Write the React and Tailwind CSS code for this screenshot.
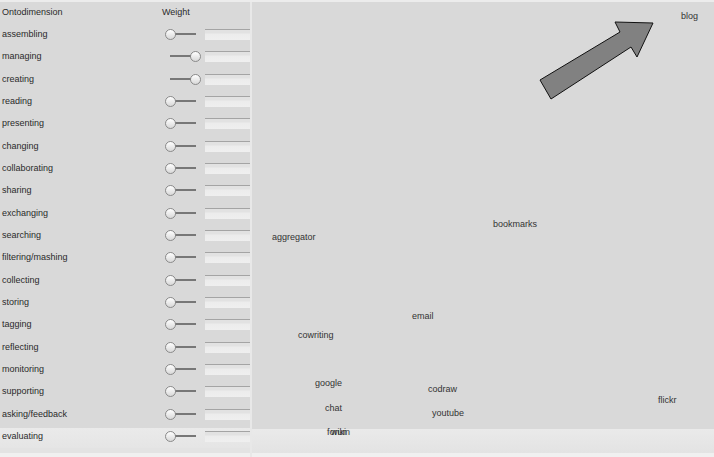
import React from "react";

const rows = [
  ["assembling", 0],
  ["managing", 1],
  ["creating", 1],
  ["reading", 0],
  ["presenting", 0],
  ["changing", 0],
  ["collaborating", 0],
  ["sharing", 0],
  ["exchanging", 0],
  ["searching", 0],
  ["filtering/mashing", 0],
  ["collecting", 0],
  ["storing", 0],
  ["tagging", 0],
  ["reflecting", 0],
  ["monitoring", 0],
  ["supporting", 0],
  ["asking/feedback", 0],
  ["evaluating", 0],
];

const labels = [
  ["blog", 681, 16],
  ["bookmarks", 493, 224],
  ["aggregator", 272, 237],
  ["email", 412, 316],
  ["cowriting", 298, 335],
  ["google", 315, 383],
  ["codraw", 428, 389],
  ["flickr", 658, 400],
  ["chat", 325, 408],
  ["youtube", 432, 413],
  ["forum", 327, 432],
  ["wiki", 331, 432],
];

function Slider({ right }) {
  return (
    <div className="relative w-[36px] h-[11px]">
      <div className="absolute left-[5px] right-[5px] top-[4px] h-[2px] bg-[#777]" />
      <div
        className={
          "absolute top-0 w-[11px] h-[11px] rounded-full border border-[#8a8a8a] bg-[linear-gradient(to_bottom,#ffffff,#d8d8d8)] " +
          (right ? "right-0" : "left-0")
        }
      />
    </div>
  );
}

function Row({ name, right, last }) {
  return (
    <div
      className={
        "grid grid-cols-[165px_37px_3px_45px] items-center h-[22.33px] " +
        (last
          ? "bg-[linear-gradient(to_bottom,#d9d9d9_3px,#eaeaea_3px,#e5e5e5)]"
          : "")
      }
    >
      <div className="pl-[2px] text-[9px] leading-[11px] text-[#2a2a2a]">{name}</div>
      <Slider right={right} />
      <div />
      <div className="h-[11px] border-t border-[#a4a4a4] bg-[linear-gradient(to_bottom,#e2e2e2,#e2e2e2_3px,#ececec_4px,#efefef)]" />
    </div>
  );
}

export default function App() {
  return (
    <div
      className="w-[714px] h-[457px] flex flex-col bg-[#d9d9d9] overflow-hidden"
      style={{ fontFamily: '"Liberation Sans", Arial, sans-serif' }}
    >
      <div className="h-[2px] bg-[#ececec]" />
      <div className="flex flex-1">
        <div className="w-[250px] flex flex-col">
          <div className="h-[21.5px] flex items-center text-[9px] leading-[11px] text-[#2a2a2a]">
            <div className="w-[162px] pl-[2px]">Ontodimension</div>
            <div>Weight</div>
          </div>
          {rows.map(([n, r], i) => (
            <Row key={n} name={n} right={r} last={i === rows.length - 1} />
          ))}
          <div className="h-[5px] bg-[#e3e3e3]" />
          <div className="flex-1 bg-[#f0f0f0]" />
        </div>
        <div className="w-[2px] bg-[#e8e8e8]" />
        <div className="relative flex-1 flex flex-col">
          <div className="h-[427px]" />
          <div className="h-[24px] bg-[linear-gradient(to_bottom,#eaeaea,#e3e3e3)]" />
          <div className="flex-1 bg-[#f0f0f0]" />
          <svg
            className="absolute left-0 top-0"
            width="462"
            height="455"
            viewBox="252 2 462 455"
          >
            <polygon
              points="540,80 620,32 615,22 653,23 637,57 631,47 551,99"
              fill="#818181"
              stroke="#111"
              strokeWidth="1"
              strokeLinejoin="miter"
            />
          </svg>
          {labels.map(([t, x, cy]) => (
            <div
              key={t}
              className="absolute text-[9px] leading-[11px] text-[#333] whitespace-nowrap"
              style={{ left: x - 252, top: cy - 2 - 5.5 }}
            >
              {t}
            </div>
          ))}
        </div>
      </div>
    </div>
  );
}
